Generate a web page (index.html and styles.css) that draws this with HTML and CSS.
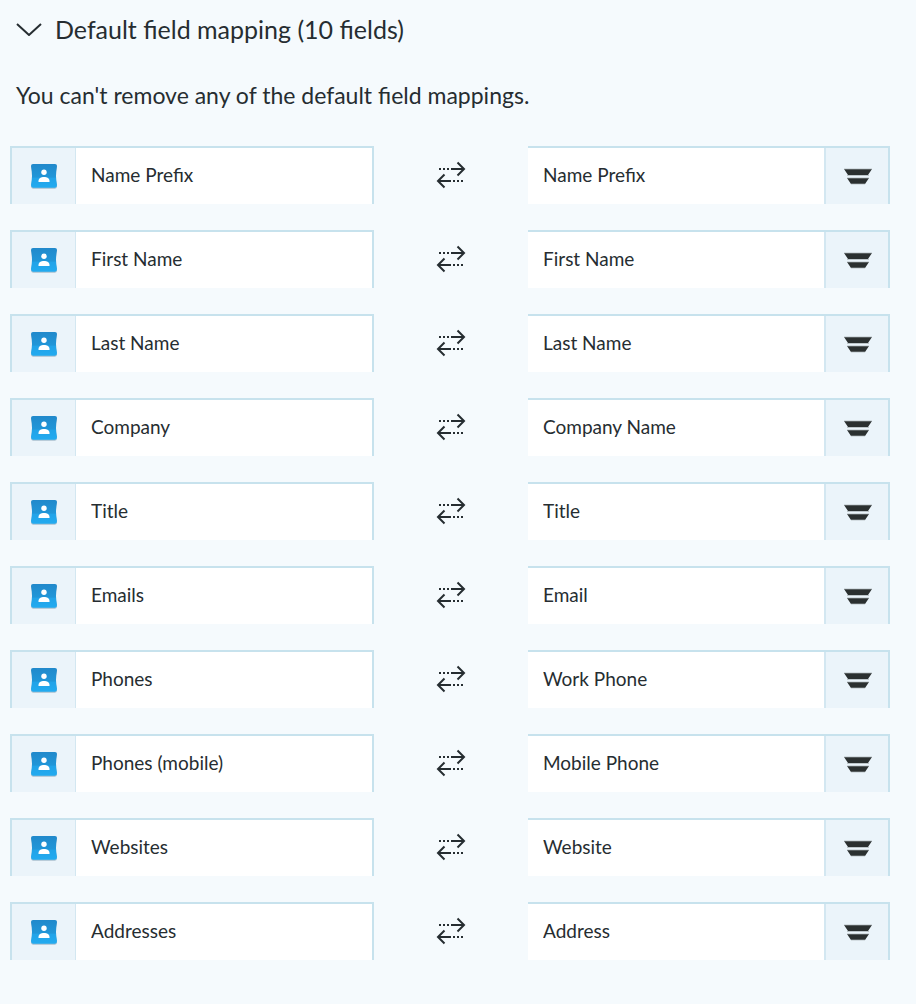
FILE: index.html
```html
<!DOCTYPE html>
<html lang="en">
<head>
  <meta charset="UTF-8">
  <meta name="viewport" content="width=device-width, initial-scale=1.0">
  <title>Default field mapping</title>
  <link rel="stylesheet" href="styles.css">
</head>
<body>
  <!-- Shared icons -->
  <svg class="sprite" aria-hidden="true">
    <defs>
      <linearGradient id="card-fill" x1="0" y1="0" x2="0" y2="1">
        <stop offset="0" stop-color="#2189cb"/>
        <stop offset="0.55" stop-color="#2196d8"/>
        <stop offset="0.6" stop-color="#22a3e8"/>
        <stop offset="1" stop-color="#22abf0"/>
      </linearGradient>
    </defs>
    <symbol id="contact" viewBox="0 0 26 26">
      <path d="M2 2H24Q26 2 26 4Q24 13 26 23Q26 25.700 24 25.700H2Q0 25.700 0 23Q2 13 0 4Q0 2 2 2Z" fill="#a9bfce"/>
      <path d="M2 1H24Q26 1 26 3Q24 13 26 22Q26 24.700 24 24.700H2Q0 24.700 0 22Q2 13 0 3Q0 1 2 1Z" fill="url(#card-fill)"/>
      <circle cx="13" cy="9.300" r="2.700" fill="#fff"/>
      <path d="M7.500 19V18C7.500 15.300 10 14 13 14S18.500 15.300 18.500 18V19Z" fill="#fff"/>
    </symbol>
    <symbol id="sync" viewBox="0 0 30 28">
      <path d="M15 8H28M21.500 1.500L28 8L21.500 14.500M15 20H2M8.500 13.500L2 20L8.500 26.500" fill="none" stroke="#262d31" stroke-width="2"/>
      <path d="M3 8H13M17 20H27" fill="none" stroke="#262d31" stroke-width="2" stroke-dasharray="2 2"/>
    </symbol>
    <symbol id="menu" viewBox="0 0 30 18">
      <path d="M1 1H29L25 7H5ZM4 10H26L22 16H8Z" fill="#2b3030"/>
      <path d="M1 1H29M4 7.500H26M4 10H26M8 16H22" stroke="#a9b1b5" stroke-width="0.700"/>
    </symbol>
  </svg>

  <main class="mapping">
    <h1 class="title">
      <button class="toggle" type="button" aria-expanded="true" aria-controls="fields">
        <svg class="chevron" viewBox="0 0 26 14" aria-hidden="true"><path d="M1 2L13 13L25 2" fill="none" stroke="#262d31" stroke-width="2"/></svg>
        Default field mapping (10 fields)
      </button>
    </h1>
    <p class="note">You can't remove any of the default field mappings.</p>
    <div class="fields" id="fields"></div>
  </main>

  <script src="script.js"></script>
</body>
</html>
```
FILE: styles.css
```css
* {
  box-sizing: border-box;
}
body {
  margin: 0;
  background-color: #f5fafd;
  color: #262d31;
  font-family: Lato, sans-serif;
}
.sprite {
  position: absolute;
  width: 0;
  height: 0;
}
.mapping {
  padding: 13px 26px 44px 10px;
}
.title {
  margin: 0;
  font-size: 25px;
  font-weight: 400;
  line-height: 32px;
}
.toggle {
  display: flex;
  align-items: center;
  gap: 13px;
  padding: 0 6px;
  border: none;
  background: none;
  color: inherit;
  font: inherit;
  cursor: pointer;
}
.chevron {
  width: 26px;
  height: 14px;
}
.note {
  margin: 34px 6px 35px;
  font-size: 23px;
  line-height: 32px;
}
.fields {
  display: grid;
  gap: 26px;
}
.row {
  display: grid;
  grid-template-columns: 182fr 77fr 181fr;
  align-items: center;
}
.field {
  display: flex;
  height: 58px;
  border: 2px solid #c7e2ed;
  border-bottom: none;
  background-color: #fff;
}
.field.target {
  border-left: none;
}
.field input {
  flex: 1;
  min-width: 0;
  padding: 0 15px 4px;
  border: none;
  background: none;
  color: inherit;
  font: inherit;
  font-size: 19px;
}
.source-icon,
.menu {
  display: flex;
  flex: none;
  align-items: center;
  justify-content: center;
  width: 64px;
  background-color: #ebf4fa;
}
.source-icon {
  border-right: 1px solid #d3e7f1;
}
.source-icon svg {
  width: 26px;
  height: 26px;
}
.menu {
  padding: 2px 0 0 2px;
  border: none;
  border-left: 2px solid #d3e7f1;
  cursor: pointer;
}
.menu svg {
  width: 30px;
  height: 18px;
}
.sync {
  justify-self: center;
  width: 30px;
  height: 28px;
}
```
FILE: script.js
```js
const mappings = [
  ['Name Prefix', 'Name Prefix'],
  ['First Name', 'First Name'],
  ['Last Name', 'Last Name'],
  ['Company', 'Company Name'],
  ['Title', 'Title'],
  ['Emails', 'Email'],
  ['Phones', 'Work Phone'],
  ['Phones (mobile)', 'Mobile Phone'],
  ['Websites', 'Website'],
  ['Addresses', 'Address']
];

document.getElementById('fields').innerHTML = mappings.map(([source, target]) => `
  <div class="row">
    <div class="field">
      <span class="source-icon"><svg aria-hidden="true"><use href="#contact"/></svg></span>
      <input type="text" value="${source}" aria-label="Contact field" readonly>
    </div>
    <svg class="sync" aria-hidden="true"><use href="#sync"/></svg>
    <div class="field target">
      <input type="text" value="${target}" aria-label="Field mapped to ${source}" readonly>
      <button class="menu" type="button" aria-label="Options for ${target}"><svg aria-hidden="true"><use href="#menu"/></svg></button>
    </div>
  </div>
`).join('');
```
